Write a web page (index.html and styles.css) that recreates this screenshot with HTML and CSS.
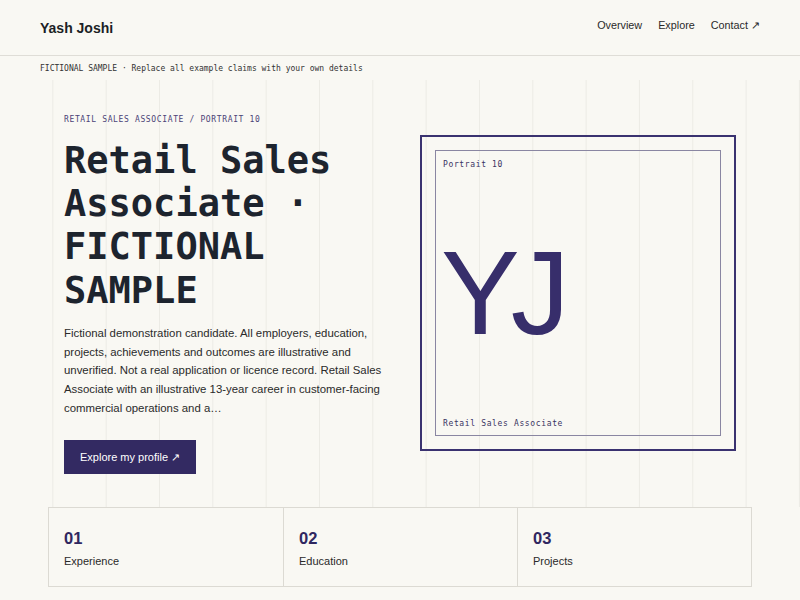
FILE: index.html
```html
<!DOCTYPE html>
<html lang="en">
<head>
<meta charset="utf-8">
<title>Yash Joshi — Retail Sales Associate</title>
<link rel="stylesheet" href="styles.css">
</head>
<body>
<header class="site-header">
  <div class="brand">Yash Joshi</div>
  <nav class="nav">
    <a href="#overview">Overview</a>
    <a href="#explore">Explore</a>
    <a href="#contact">Contact ↗</a>
  </nav>
</header>
<div class="notice">FICTIONAL SAMPLE · Replace all example claims with your own details</div>
<section class="hero">
  <div class="hero-inner">
    <div class="hero-copy">
      <p class="eyebrow">RETAIL SALES ASSOCIATE / PORTRAIT 10</p>
      <h1 class="title">Retail Sales Associate · FICTIONAL SAMPLE</h1>
      <p class="lead">Fictional demonstration candidate. All employers, education, projects, achievements and outcomes are illustrative and unverified. Not a real application or licence record. Retail Sales Associate with an illustrative 13-year career in customer-facing commercial operations and a…</p>
      <a class="btn" href="#explore">Explore my profile ↗</a>
    </div>
    <div class="portrait">
      <div class="portrait-inner">
        <span class="portrait-label">Portrait 10</span>
        <span class="initials">YJ</span>
        <span class="portrait-label">Retail Sales Associate</span>
      </div>
    </div>
  </div>
</section>
<section class="cards">
  <div class="card"><div class="card-num">01</div><div class="card-label">Experience</div></div>
  <div class="card"><div class="card-num">02</div><div class="card-label">Education</div></div>
  <div class="card"><div class="card-num">03</div><div class="card-label">Projects</div></div>
</section>
</body>
</html>
```
FILE: styles.css
```css
* { box-sizing: border-box; }
html, body { margin: 0; padding: 0; }
body {
  background: #f9f8f3;
  color: #222;
  font-family: "Liberation Sans", Arial, sans-serif;
}
a { color: inherit; text-decoration: none; }

.site-header {
  height: 56px;
  display: flex;
  align-items: center;
  justify-content: space-between;
  padding: 0 40px;
  border-bottom: 1px solid #dfddd7;
}
.brand {
  font-size: 14px;
  font-weight: 700;
  color: #1c1f26;
}
.nav {
  display: flex;
  gap: 16px;
  font-size: 10.8px;
  color: #2a2a2a;
  margin-top: -4px;
}

.notice {
  height: 24px;
  display: flex;
  align-items: center;
  padding: 0 40px;
  font-family: "DejaVu Sans Mono", monospace;
  font-size: 8px;
  color: #333;
}

.hero {
  background-image: linear-gradient(90deg, transparent calc(100% - 1px), #ecebe5 calc(100% - 1px));
  background-size: calc(100% / 15) 100%;
  padding: 32px 0 33px;
}
.hero-inner {
  margin: 0 48px;
  padding: 0 16px;
  display: grid;
  grid-template-columns: 1fr 316px;
  column-gap: 36px;
  align-items: center;
}
.eyebrow {
  margin: 0;
  font-family: "DejaVu Sans Mono", monospace;
  font-size: 8px;
  line-height: 15px;
  letter-spacing: 0.08em;
  color: #4b4377;
}
.title {
  margin: 12px 0 0;
  font-family: "DejaVu Sans Mono", monospace;
  font-size: 37px;
  line-height: 43.2px;
  font-weight: 700;
  color: #1d242e;
}
.lead {
  margin: 12px 0 0;
  font-size: 11.4px;
  line-height: 18.7px;
  color: #2a2a2a;
}
.btn {
  display: inline-block;
  margin-top: 23px;
  height: 34px;
  line-height: 34px;
  padding: 0 16px;
  background: #332a62;
  color: #fff;
  font-size: 11px;
}

.portrait {
  width: 316px;
  height: 316px;
  border: 2px solid #3a3270;
  padding: 13px;
}
.portrait-inner {
  height: 100%;
  border: 1px solid #8a86a2;
  padding: 8px 7px 5px;
  display: flex;
  flex-direction: column;
  justify-content: space-between;
  align-items: flex-start;
}
.portrait-label {
  font-family: "DejaVu Sans Mono", monospace;
  font-size: 8px;
  line-height: 12px;
  letter-spacing: 0.08em;
  color: #3a3362;
}
.initials {
  font-size: 118px;
  line-height: 1;
  letter-spacing: -0.075em;
  margin-left: -2px;
  margin-top: -3px;
  color: #372e6b;
}

.cards {
  margin: 0 48px;
  display: grid;
  grid-template-columns: repeat(3, 1fr);
  border: 1px solid #dcdad3;
  background: #f9f8f3;
}
.card {
  padding: 20px 15px 17px;
  border-left: 1px solid #dcdad3;
}
.card:first-child { border-left: none; }
.card-num {
  font-size: 16.5px;
  line-height: 20px;
  font-weight: 700;
  color: #2f2760;
}
.card-label {
  margin-top: 5px;
  font-size: 11px;
  line-height: 16px;
  color: #2a2a2a;
}
```
